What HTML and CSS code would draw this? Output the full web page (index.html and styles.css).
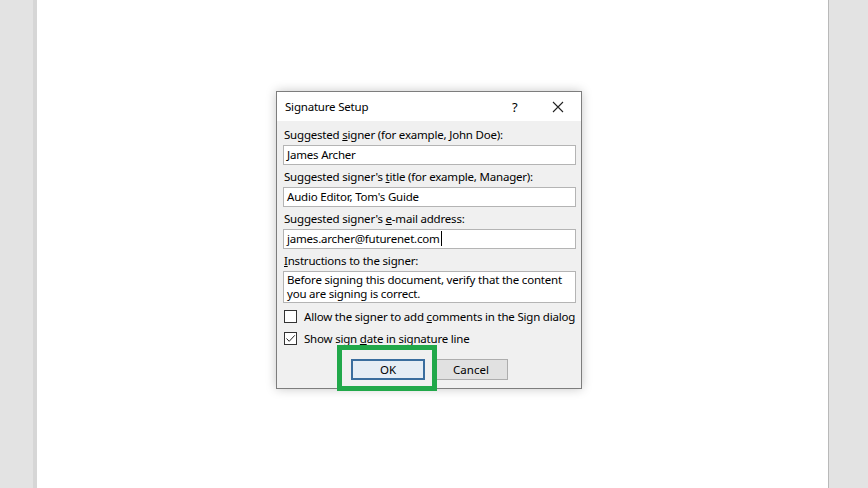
FILE: index.html
```html
<!doctype html>
<html>
<head>
    <title>Signature Setup</title>
    <meta charset="utf-8">
    <link rel="stylesheet" href="styles.css">
</head>
<body>
<div class="page">
    <div class="dialog">
        <div class="titlebar">
            <span class="title">Signature Setup</span>
            <span class="help">?</span>
            <svg class="close" width="12" height="12" viewBox="0 0 12 12"><path d="M1 1L11 11M11 1L1 11" stroke="#222" stroke-width="1.1" fill="none"/></svg>
        </div>
        <div class="content">
            <label>Suggested <u>s</u>igner (for example, John Doe):</label>
            <div class="field">James Archer</div>
            <label>Suggested signer's <u>t</u>itle (for example, Manager):</label>
            <div class="field">Audio Editor, Tom's Guide</div>
            <label>Suggested signer's <u>e</u>-mail address:</label>
            <div class="field"><span class="caret">james.archer@futurenet.com</span></div>
            <label><u>I</u>nstructions to the signer:</label>
            <div class="field area">Before signing this document, verify that the content you are signing is correct.</div>
            <div class="check"><span class="box"></span><span>Allow the signer to add <u>c</u>omments in the Sign dialog</span></div>
            <div class="check"><span class="box"><svg width="11" height="11" viewBox="0 0 11 11"><path d="M1.5 5.5L4.2 8.3L9.8 2.3" stroke="#222" stroke-width="1" fill="none"/></svg></span><span>Show sign <u>d</u>ate in signature line</span></div>
            <div class="buttons">
                <button class="btn default">OK</button>
                <button class="btn">Cancel</button>
                <div class="highlight"></div>
            </div>
        </div>
    </div>
</div>
</body>
</html>
```

FILE: styles.css
```css
body        { margin:0; background:#e3e3e3; font-family:"Noto Sans", sans-serif; font-size:11.5px; letter-spacing:-0.2px; color:#000; }
.page       { margin-left:33px; width:796px; height:488px; background:#fff; border-left:4px solid #d6d6d6; border-right:1px solid #b9b9b9; padding:91px 0 0 239px; box-sizing:border-box; }
.dialog     { width:306px; border:1px solid #7d7d7d; background:#f0f0f0; box-shadow:0 0 10px rgba(0,0,0,0.22); box-sizing:border-box; }
.titlebar   { height:29px; background:#fff; display:flex; align-items:center; padding-left:8px; }
.title      { flex:1; }
.help       { width:16px; font-size:13px; }
.close      { margin:0 17px 0 24px; }
.content    { padding:6px 5px 8px 6px; position:relative; }
label       { display:block; line-height:16px; padding-left:1px; }
.field      { height:20px; margin:2px 0 4px; background:#fff; border:1px solid #b4b4b4; box-sizing:border-box; padding:0 3px; line-height:18px; white-space:nowrap; }
.field.area { height:32px; line-height:14px; padding-top:1px; white-space:normal; margin-bottom:7px; }
.caret      { border-right:1px solid #000; padding-right:1px; }
.check      { display:flex; align-items:center; height:13px; margin:0 0 9px 1px; white-space:nowrap; }
.box        { width:13px; height:13px; border:1px solid #333; background:#fff; box-sizing:border-box; margin-right:7px; display:flex; align-items:center; justify-content:center; }
.buttons    { display:flex; justify-content:center; gap:9px; margin-top:14px; position:relative; }
.btn        { width:74px; height:21px; font:inherit; background:#e1e1e1; border:1px solid #adadad; padding:0; }
.btn.default { border:2px solid #3a6d9e; background:#e5edf5; }
.highlight  { position:absolute; left:54px; top:-14px; width:100px; height:46px; border:5px solid #21a84a; box-sizing:border-box; }
```
